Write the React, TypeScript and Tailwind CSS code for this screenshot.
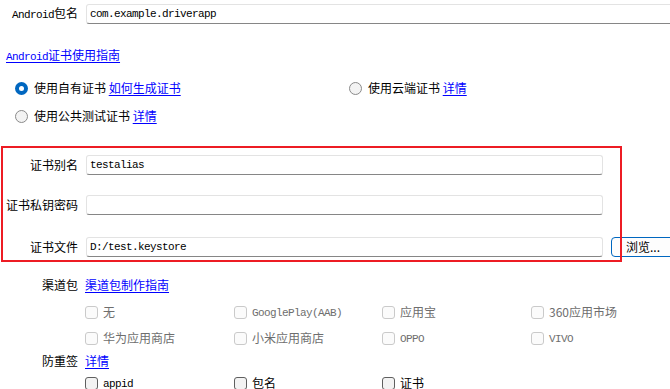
import React from "react";

const mono = "font-['Liberation_Mono','Noto_Sans_CJK_SC',monospace] text-[11px] tracking-[-0.6px]";

function M({ children }: { children: React.ReactNode }) {
    return <span className={mono}>{children}</span>;
}

function Link({ children }: { children: React.ReactNode }) {
    return <span className="text-[#0000ff] underline underline-offset-2 cursor-pointer">{children}</span>;
}

function Radio({ checked }: { checked?: boolean }) {
    if (checked) {
        return (
            <span className="w-[13px] h-[13px] rounded-full bg-[#0067c0] flex items-center justify-center shrink-0">
                <span className="w-[5px] h-[5px] rounded-full bg-white"></span>
            </span>
        );
    }
    return <span className="w-[13px] h-[13px] rounded-full border border-[#8a8a8a] bg-[#f3f3f3] shrink-0"></span>;
}

function Check({ label, disabled, isMono }: { label: string; disabled?: boolean; isMono?: boolean }) {
    return (
        <div className="flex items-center gap-[5px] h-[18px]">
            <span
                className={
                    disabled
                        ? "w-[13px] h-[13px] rounded-[3px] border border-[#cacaca] bg-[#fbfbfb] shrink-0"
                        : "w-[13px] h-[13px] rounded-[3px] border border-[#5f5f5f] bg-[#f3f3f3] shrink-0"
                }
            ></span>
            <span className={disabled ? "text-[#6e6e6e]" : "text-black"}>
                {isMono ? <M>{label}</M> : label}
            </span>
        </div>
    );
}

function TextBox({ value, width }: { value: string; width: string }) {
    return (
        <input
            readOnly
            value={value}
            className={`${width} shrink-0 h-[20px] border border-[#e3e3e3] border-b-[#868686] rounded-[3px] bg-white px-[3px] outline-none ${mono} text-black`}
        />
    );
}

function FieldRow({ label, value, children }: { label: string; value: string; children?: React.ReactNode }) {
    return (
        <div className="flex items-center gap-[8px] h-[20px]">
            <div className="w-[78px] text-right shrink-0">{label}</div>
            <TextBox value={value} width="w-[517px]" />
            {children}
        </div>
    );
}

export default function App() {
    return (
        <div className="w-[670px] h-[389px] overflow-hidden bg-white text-black text-[12px] leading-[18px] font-['Noto_Sans_CJK_SC',sans-serif]">
            {/* package name */}
            <div className="mt-[4px] flex items-center gap-[8px] h-[20px]">
                <div className="w-[78px] text-right shrink-0">
                    <M>Android</M>包名
                </div>
                <TextBox value="com.example.driverapp" width="w-[600px]" />
            </div>

            <div className="mt-[23px] ml-[6px] h-[16px] leading-[16px]">
                <Link>
                    <M>Android</M>证书使用指南
                </Link>
            </div>

            {/* certificate source */}
            <div className="mt-[16px] flex items-center h-[18px]">
                <div className="w-[349px] pl-[15px] flex items-center gap-[6px]">
                    <Radio checked />
                    <span>
                        使用自有证书 <Link>如何生成证书</Link>
                    </span>
                </div>
                <div className="flex items-center gap-[6px]">
                    <Radio />
                    <span>
                        使用云端证书 <Link>详情</Link>
                    </span>
                </div>
            </div>
            <div className="mt-[10px] pl-[15px] flex items-center gap-[6px] h-[18px]">
                <Radio />
                <span>
                    使用公共测试证书 <Link>详情</Link>
                </span>
            </div>

            {/* certificate fields */}
            <div className="relative mt-[21px] pt-[9px] h-[116px]">
                <FieldRow label="证书别名" value="testalias" />
                <div className="mt-[20px]">
                    <FieldRow label="证书私钥密码" value="" />
                </div>
                <div className="mt-[22px]">
                    <FieldRow label="证书文件" value="D:/test.keystore">
                        <button className="w-[80px] h-[20px] shrink-0 border border-[#0067c0] rounded-[4px] bg-[#fdfdfd] text-left pl-[14px] leading-[18px]">
                            浏览...
                        </button>
                    </FieldRow>
                </div>
                <div className="absolute top-0 left-[1px] w-[621px] h-[116px] border-2 border-[#ed1c24] pointer-events-none"></div>
            </div>

            {/* channel packages */}
            <div className="mt-[14px] flex items-center gap-[7px] h-[18px]">
                <div className="w-[78px] text-right shrink-0">渠道包</div>
                <Link>渠道包制作指南</Link>
            </div>
            <div className="mt-[9px] pl-[85px] grid grid-cols-[149px_148px_149px_120px]">
                <Check label="无" disabled />
                <Check label="GooglePlay(AAB)" disabled isMono />
                <Check label="应用宝" disabled />
                <Check label="360应用市场" disabled />
            </div>
            <div className="mt-[8px] pl-[85px] grid grid-cols-[149px_148px_149px_120px]">
                <Check label="华为应用商店" disabled />
                <Check label="小米应用商店" disabled />
                <Check label="OPPO" disabled isMono />
                <Check label="VIVO" disabled isMono />
            </div>

            {/* re-sign protection */}
            <div className="mt-[5px] flex items-center gap-[7px] h-[18px]">
                <div className="w-[78px] text-right shrink-0">防重签</div>
                <Link>详情</Link>
            </div>
            <div className="mt-[4px] pl-[85px] grid grid-cols-[149px_148px_149px_120px]">
                <Check label="appid" isMono />
                <Check label="包名" />
                <Check label="证书" />
            </div>
        </div>
    );
}
